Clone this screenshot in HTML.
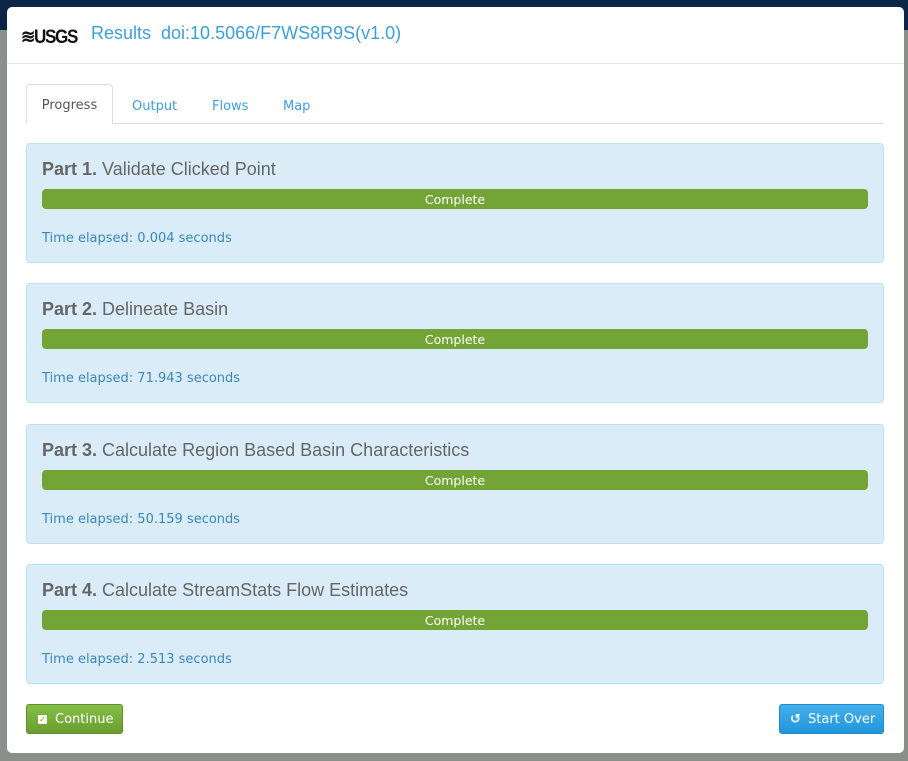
<!DOCTYPE html>
<html><head><style>
body{margin:0;width:908px;height:761px;background:#8a8f8c;position:relative;overflow:hidden;font-family:"DejaVu Sans","Liberation Sans",sans-serif}
.top{position:absolute;left:0;top:0;width:908px;height:30px;background:#0b2545}
.modal{position:absolute;left:7px;top:7px;width:897px;height:746px;background:#fff;border-radius:5px}
.hdr{position:absolute;left:0;top:0;width:897px;height:56px;border-bottom:1px solid #e5e5e5}
.logo{position:absolute;left:14px;top:19px;font:bold 19px "Liberation Sans",sans-serif;letter-spacing:-1.5px;color:#111;transform:scaleX(0.9);transform-origin:left}
.title{position:absolute;left:84px;top:16px;font:18px "Liberation Sans",sans-serif;color:#3d9fd8}
.tabs{position:absolute;left:19px;top:116px;width:858px;border-top:1px solid #ddd}
.tab{position:absolute;top:92px;font-size:13px;color:#3d9fd8}
.tab.act{left:19px;top:77px;width:87px;height:40px;border:1px solid #ddd;border-bottom:1px solid #fff;border-radius:4px 4px 0 0;background:#fff;color:#555;box-sizing:border-box;text-align:center;line-height:42px}
.panel{position:absolute;left:19px;width:858px;height:120px;background:#d9ecf7;border:1px solid #bde3f0;border-radius:4px;box-sizing:border-box}
.panel h3{position:absolute;left:15px;top:15px;margin:0;font:18px "Liberation Sans",sans-serif;color:#666}
.bar{position:absolute;left:15px;top:45px;width:826px;height:20px;background:#72a536;border-radius:4px;color:#fff;font-size:12.5px;text-align:center;line-height:21px}
.time{position:absolute;left:15px;top:87px;font-size:13px;color:#3b88b8}
.btn{position:absolute;top:697px;height:30px;border-radius:3px;color:#fff;font-size:13px;line-height:30px;box-sizing:border-box}
</style></head><body>
<div class="top"></div>
<div class="modal">
<div class="hdr"><div class="logo">≋USGS</div><div class="title">Results &nbsp;doi:10.5066/F7WS8R9S(v1.0)</div></div>
<div class="tabs"></div>
<div class="tab act">Progress</div>
<div class="tab" style="left:125px">Output</div>
<div class="tab" style="left:205px">Flows</div>
<div class="tab" style="left:276px">Map</div>
<div class="panel" style="top:136px"><h3><b>Part 1.</b> Validate Clicked Point</h3><div class="bar">Complete</div><div class="time">Time elapsed: 0.004 seconds</div></div>
<div class="panel" style="top:276px"><h3><b>Part 2.</b> Delineate Basin</h3><div class="bar">Complete</div><div class="time">Time elapsed: 71.943 seconds</div></div>
<div class="panel" style="top:417px"><h3><b>Part 3.</b> Calculate Region Based Basin Characteristics</h3><div class="bar">Complete</div><div class="time">Time elapsed: 50.159 seconds</div></div>
<div class="panel" style="top:557px"><h3><b>Part 4.</b> Calculate StreamStats Flow Estimates</h3><div class="bar">Complete</div><div class="time">Time elapsed: 2.513 seconds</div></div>
<div class="btn" style="left:19px;width:97px;background:linear-gradient(#86bf45,#6a9d30);border:1px solid #5f8e2a;padding-left:28px">Continue<span style="position:absolute;left:11px;top:10px;width:9px;height:9px;background:#fff;border-radius:1px;color:#6a9d30;font-size:8px;line-height:9px;text-align:center">✓</span></div>
<div class="btn" style="left:772px;width:105px;background:linear-gradient(#45b0ec,#2196dc);border:1px solid #1f8ccc;padding-left:28px">Start Over<span style="position:absolute;left:10px;top:0;font-size:13px;font-weight:bold">↺</span></div>
</div>
</body></html>
